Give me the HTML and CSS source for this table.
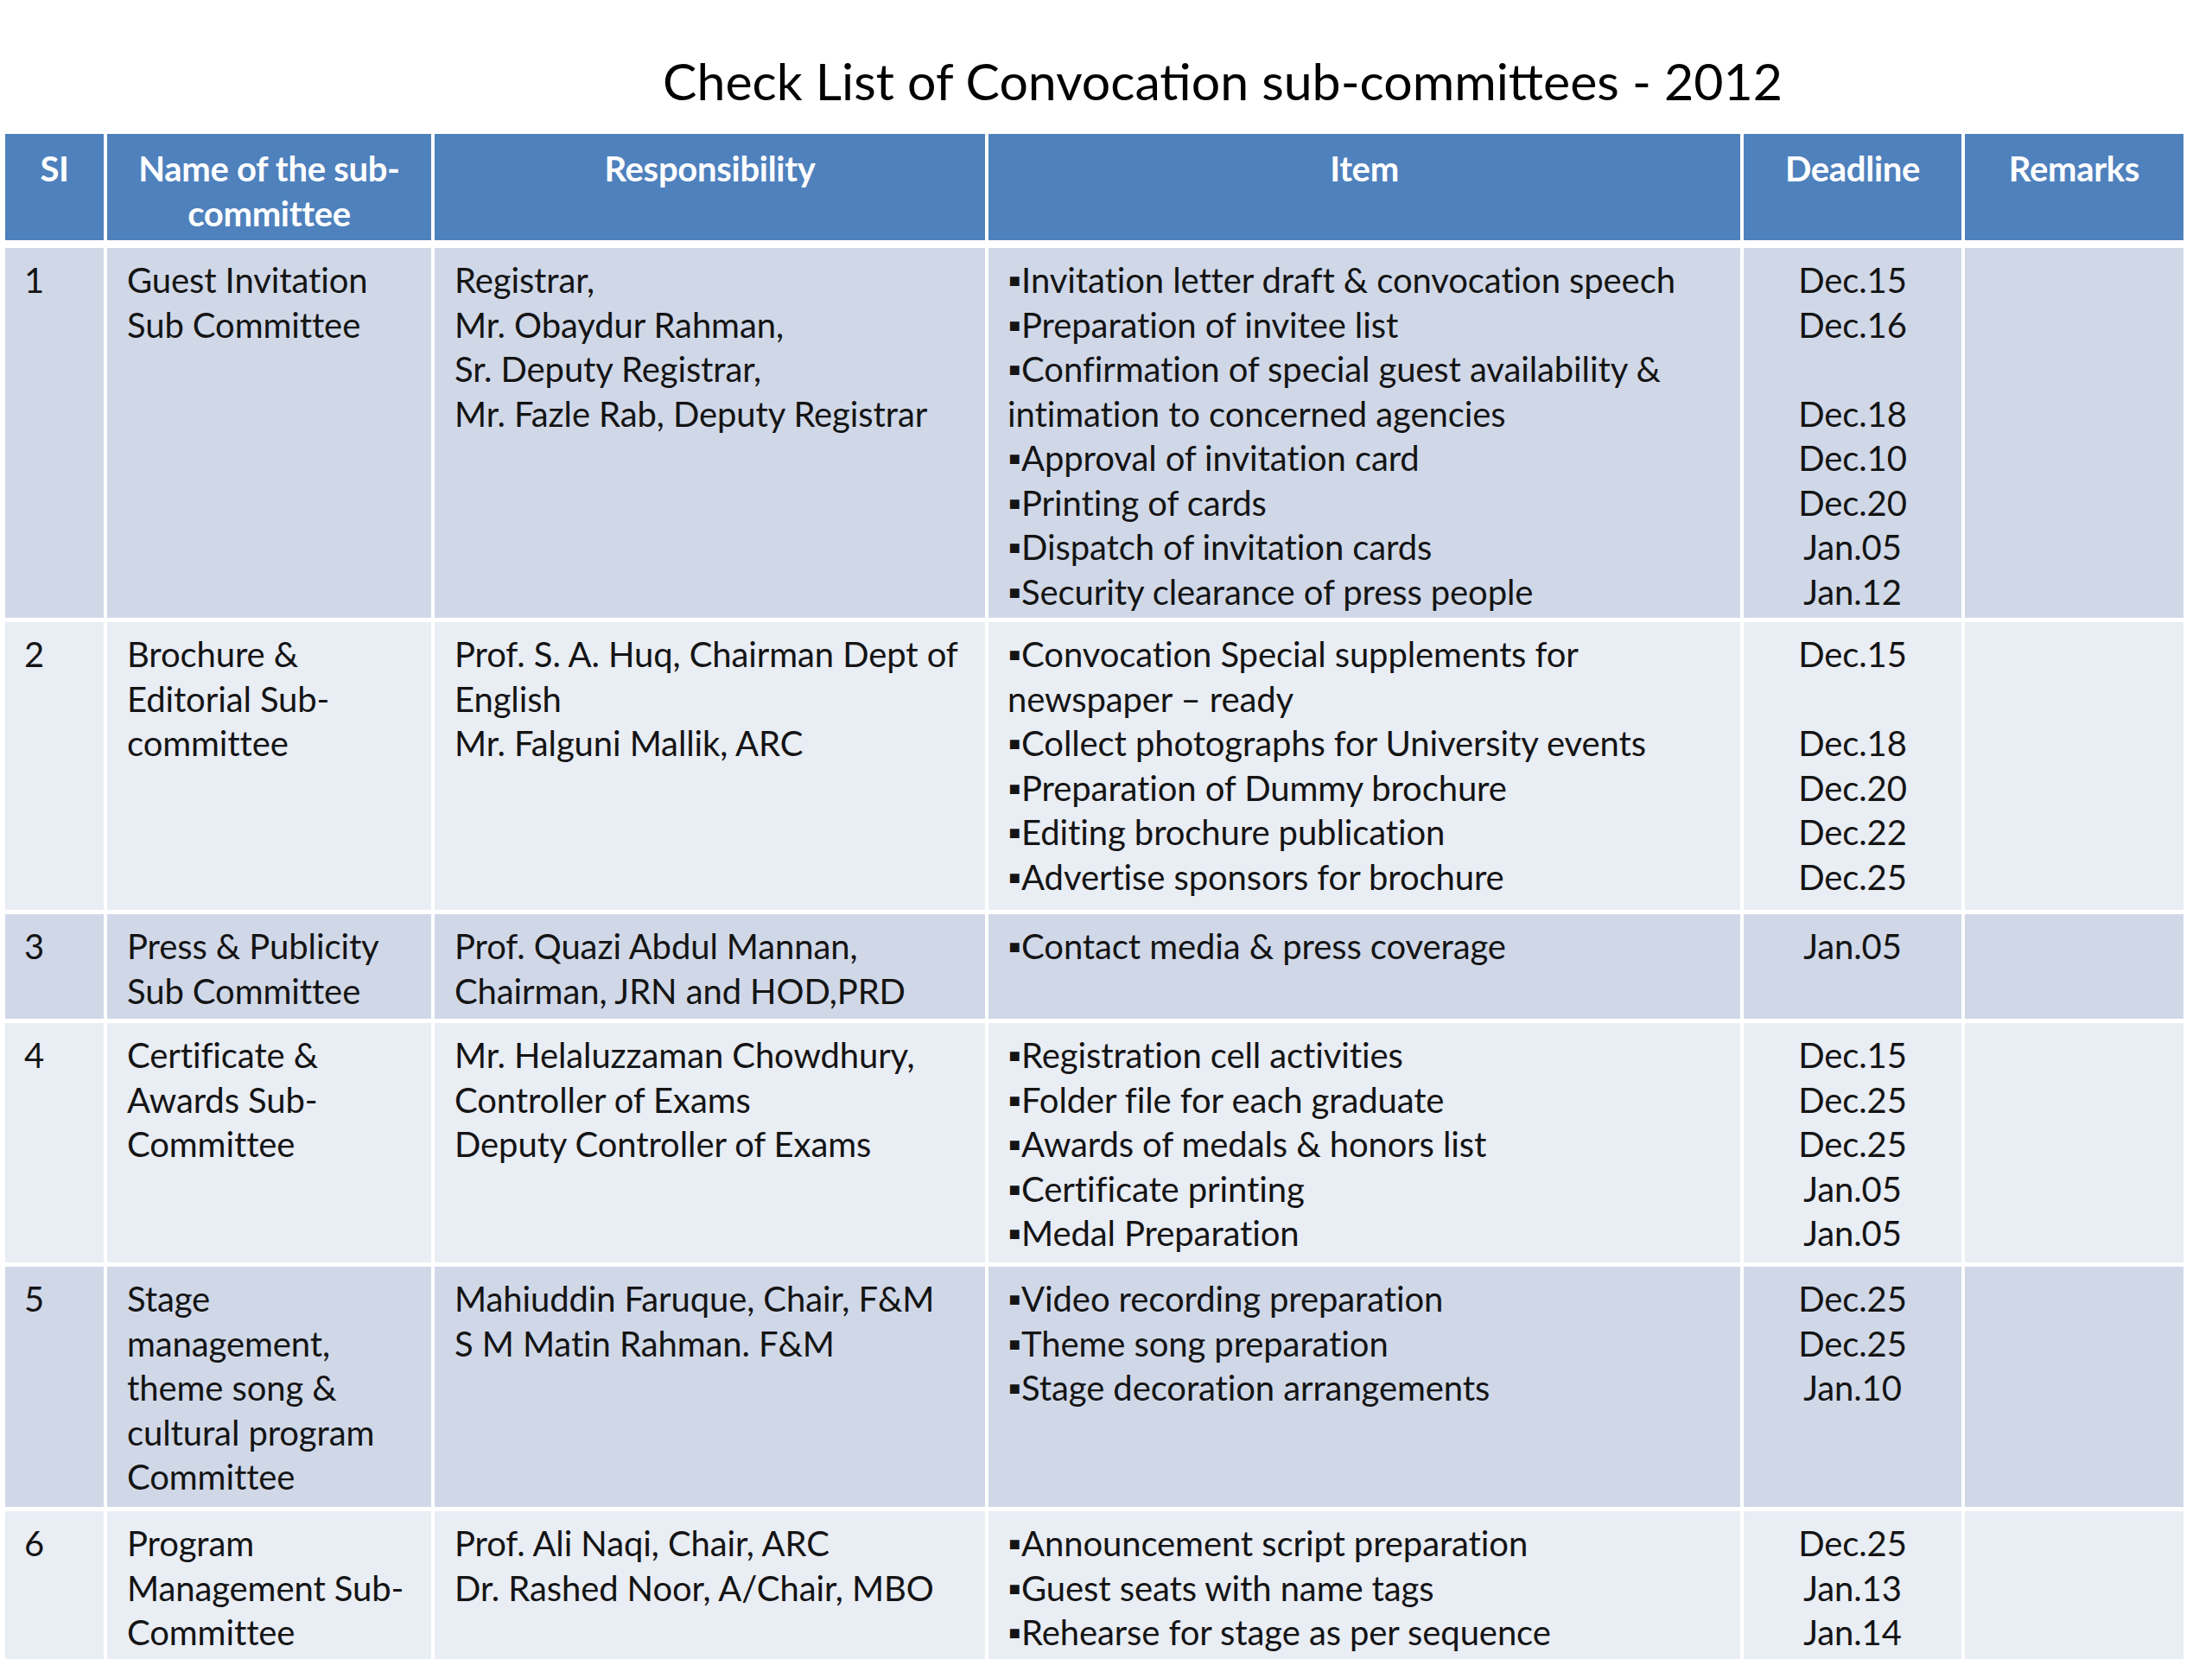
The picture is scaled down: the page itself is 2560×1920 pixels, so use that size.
FILE: index.html
```html
<!DOCTYPE html>
<html lang="en">
<head>
<meta charset="utf-8">
<title>Check List of Convocation sub-committees - 2012</title>
<link rel="stylesheet" href="styles.css">
</head>
<body>
<h1 class="title">Check List of Convocation sub-committees - 2012</h1>
<table class="grid">
  <colgroup>
    <col class="c-sl"><col class="c-name"><col class="c-resp"><col class="c-item"><col class="c-dead"><col class="c-rem">
  </colgroup>
  <thead>
    <tr>
      <th>SI</th>
      <th>Name of the sub-<br>committee</th>
      <th>Responsibility</th>
      <th>Item</th>
      <th>Deadline</th>
      <th>Remarks</th>
    </tr>
  </thead>
  <tbody>
    <tr class="dark r1">
      <td>1</td>
      <td>Guest Invitation<br>Sub Committee</td>
      <td>Registrar,<br>Mr. Obaydur Rahman,<br>Sr. Deputy Registrar,<br>Mr. Fazle Rab, Deputy Registrar</td>
      <td>▪Invitation letter draft &amp; convocation speech<br>▪Preparation of invitee list<br>▪Confirmation of special guest availability &amp;<br>intimation to concerned agencies<br>▪Approval of invitation card<br>▪Printing of cards<br>▪Dispatch of invitation cards<br>▪Security clearance of press people</td>
      <td class="dl">Dec.15<br>Dec.16<br><br>Dec.18<br>Dec.10<br>Dec.20<br>Jan.05<br>Jan.12</td>
      <td></td>
    </tr>
    <tr class="light r2">
      <td>2</td>
      <td>Brochure &amp;<br>Editorial Sub-<br>committee</td>
      <td>Prof. S. A. Huq, Chairman Dept of<br>English<br>Mr. Falguni Mallik, ARC</td>
      <td>▪Convocation Special supplements for<br>newspaper – ready<br>▪Collect photographs for University events<br>▪Preparation of Dummy brochure<br>▪Editing brochure publication<br>▪Advertise sponsors for brochure</td>
      <td class="dl">Dec.15<br><br>Dec.18<br>Dec.20<br>Dec.22<br>Dec.25</td>
      <td></td>
    </tr>
    <tr class="dark r3">
      <td>3</td>
      <td>Press &amp; Publicity<br>Sub Committee</td>
      <td>Prof. Quazi Abdul Mannan,<br>Chairman, JRN and HOD,PRD</td>
      <td>▪Contact media &amp; press coverage</td>
      <td class="dl">Jan.05</td>
      <td></td>
    </tr>
    <tr class="light r4">
      <td>4</td>
      <td>Certificate &amp;<br>Awards Sub-<br>Committee</td>
      <td>Mr. Helaluzzaman Chowdhury,<br>Controller of Exams<br>Deputy Controller of Exams</td>
      <td>▪Registration cell activities<br>▪Folder file for each graduate<br>▪Awards of medals &amp; honors list<br>▪Certificate printing<br>▪Medal Preparation</td>
      <td class="dl">Dec.15<br>Dec.25<br>Dec.25<br>Jan.05<br>Jan.05</td>
      <td></td>
    </tr>
    <tr class="dark r5">
      <td>5</td>
      <td>Stage<br>management,<br>theme song &amp;<br>cultural program<br>Committee</td>
      <td>Mahiuddin Faruque, Chair, F&amp;M<br>S M Matin Rahman. F&amp;M</td>
      <td>▪Video recording preparation<br>▪Theme song preparation<br>▪Stage decoration arrangements</td>
      <td class="dl">Dec.25<br>Dec.25<br>Jan.10</td>
      <td></td>
    </tr>
    <tr class="light r6">
      <td>6</td>
      <td>Program<br>Management Sub-<br>Committee</td>
      <td>Prof. Ali Naqi, Chair, ARC<br>Dr. Rashed Noor, A/Chair, MBO</td>
      <td>▪Announcement script preparation<br>▪Guest seats with name tags<br>▪Rehearse for stage as per sequence</td>
      <td class="dl">Dec.25<br>Jan.13<br>Jan.14</td>
      <td></td>
    </tr>
  </tbody>
</table>
</body>
</html>
```
FILE: styles.css
```css
html, body {
  margin: 0;
  padding: 0;
  background: #ffffff;
}
body {
  width: 2560px;
  height: 1920px;
  overflow: hidden;
  font-family: Lato, "Open Sans", "Liberation Sans", sans-serif;
  color: #141414;
}
.title {
  margin: 0;
  padding: 58px 0 0 270px;
  height: 72px;
  line-height: 72px;
  margin-bottom: 25px;
  text-align: center;
  font-size: 59px;
  font-weight: 400;
  letter-spacing: 0;
  color: #000;
}
.grid {
  margin-left: 6px;
  width: 2521px;
  table-layout: fixed;
  border-collapse: separate;
  border-spacing: 0;
}
.c-sl { width: 114px; }
.c-name { width: 379px; }
.c-resp { width: 641px; }
.c-item { width: 874px; }
.c-dead { width: 256px; }
.c-rem { width: 257px; }

.grid th, .grid td {
  box-sizing: border-box;
  vertical-align: top;
  white-space: nowrap;
  overflow: hidden;
  border-left: 4px solid #fff;
  font-size: 40px;
  line-height: 51.5px;
  letter-spacing: -0.1px;
}
.grid th:first-child, .grid td:first-child {
  border-left: 0;
}
.grid th {
  background: #4f81bd;
  color: #fff;
  font-weight: 700;
  text-align: center;
  height: 127px;
  padding: 15px 4px 0;
  border-bottom: 4px solid #fff;
  letter-spacing: -0.3px;
}
.grid td {
  border-top: 5px solid #fff;
  padding: 12px 10px 0 23px;
  text-align: left;
}
.grid td:first-child { padding-left: 22px; }
.grid td:nth-child(4) { padding-left: 22px; }
.grid td.dl {
  text-align: center;
  padding-left: 0;
  padding-right: 0;
}
.dark td { background: #d0d8e8; }
.light td { background: #e9edf4; }
.r1 td { height: 433px; }
.r2 td { height: 338px; }
.r3 td { height: 126px; }
.r4 td { height: 282px; }
.r5 td { height: 283px; }
.r6 td { height: 186px; padding-top: 12px; }
```
